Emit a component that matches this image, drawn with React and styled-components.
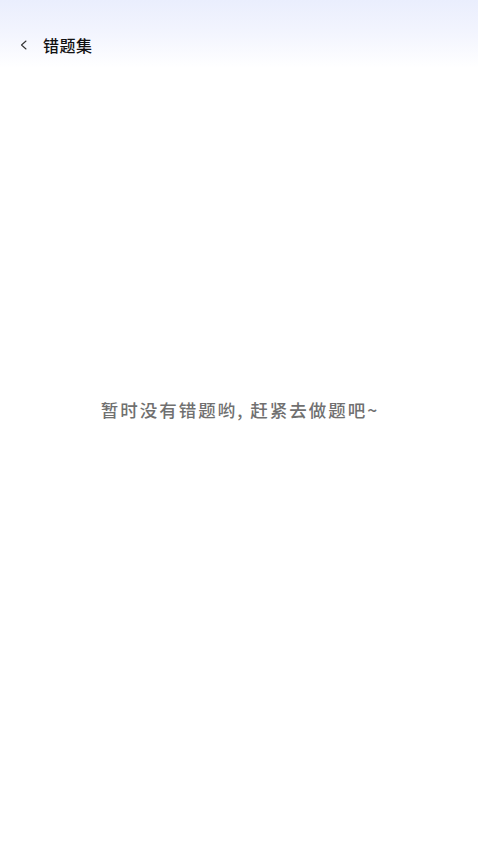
import React from 'react'
import styled, { createGlobalStyle } from 'styled-components'

const GlobalStyle = createGlobalStyle`
  html, body {
    margin: 0;
    padding: 0;
    background: #ffffff;
    font-family: "Noto Sans CJK SC", "Noto Sans", sans-serif;
  }
`

const Page = styled.div`
  width: 478px;
  height: 850px;
  display: flex;
  flex-direction: column;
  background: #ffffff;
  overflow: hidden;
`

const Header = styled.header`
  height: 68px;
  padding-top: 22px;
  box-sizing: border-box;
  display: flex;
  align-items: center;
  background: linear-gradient(180deg, #eaeefd 0%, #f3f5fe 50%, #ffffff 100%);
`

const BackButton = styled.button`
  width: 38px;
  height: 44px;
  padding: 0 0 0 18px;
  border: none;
  background: transparent;
  display: flex;
  align-items: center;
  cursor: pointer;
`

const Title = styled.h1`
  margin: 0 0 0 5px;
  font-size: 16px;
  font-weight: 500;
  color: #111111;
  letter-spacing: 0.5px;
`

const Body = styled.main`
  flex: 1;
  display: flex;
  justify-content: center;
  padding-top: 329px;
`

const EmptyText = styled.p`
  margin: 0 0 0 2px;
  font-size: 17.5px;
  font-weight: 500;
  color: #707070;
  height: 26px;
  line-height: 26px;
  letter-spacing: 2px;
  white-space: nowrap;
`

const App = () => (
  <Page>
    <GlobalStyle />
    <Header>
      <BackButton aria-label="返回">
        <svg width="12" height="14" viewBox="0 0 12 14" fill="none">
          <path d="M8 3L3.5 7L8 11" stroke="#333" strokeWidth="1.1" strokeLinecap="round" strokeLinejoin="round" />
        </svg>
      </BackButton>
      <Title>错题集</Title>
    </Header>
    <Body>
      <EmptyText>暂时没有错题哟, 赶紧去做题吧~</EmptyText>
    </Body>
  </Page>
)

export default App
